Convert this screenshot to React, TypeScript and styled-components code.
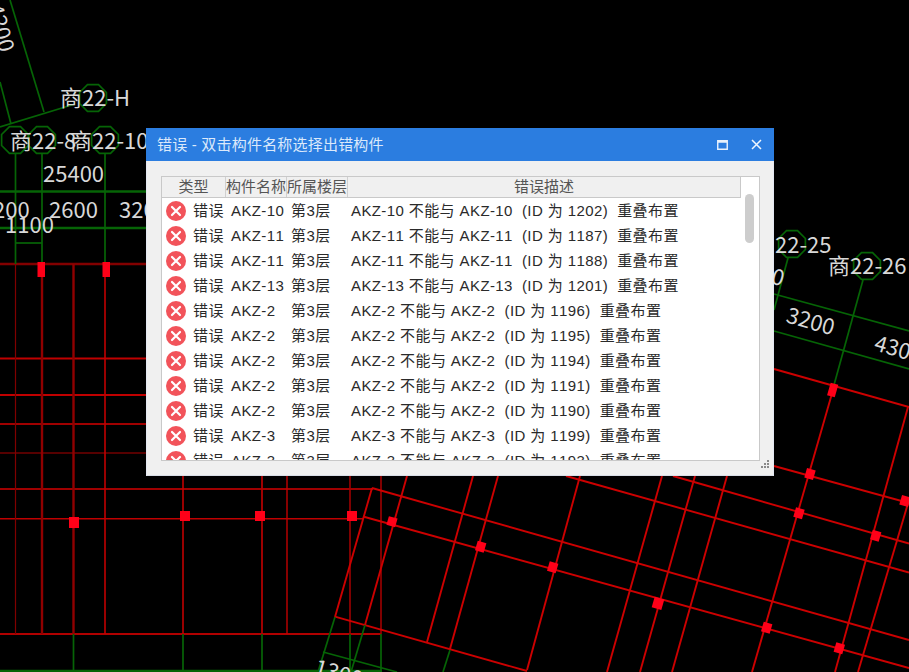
import React from "react";
import styled, { createGlobalStyle } from "styled-components";

const Global = createGlobalStyle`
  html, body { margin: 0; padding: 0; background: #000; }
  body { font-family: "Liberation Sans", "Noto Sans CJK SC", sans-serif; }
`;

const Scene = styled.div`
  position: relative;
  width: 909px;
  height: 672px;
  overflow: hidden;
  background: #000;
`;

const Canvas = styled.svg`
  display: block;
  width: 909px;
  height: 672px;
`;

const Label = styled.text`
  fill: #d8d8d8;
  font-family: "Noto Sans CJK SC", "Liberation Sans", sans-serif;
  font-size: 22px;
`;

const Dialog = styled.section`
  position: absolute;
  left: 146px;
  top: 128px;
  width: 628px;
  height: 348px;
  display: flex;
  flex-direction: column;
  background: #f0f0f0;
  box-shadow: inset 1px 0 0 #e4e8f2, inset -1px 0 0 #e4e8f2, inset 0 -1px 0 #d9dde6;
`;

const TitleBar = styled.header`
  height: 33px;
  flex: none;
  display: flex;
  align-items: center;
  padding: 0 1px 0 11px;
  background: #2b7de0;
`;

const Title = styled.h1`
  flex: 1;
  margin: 0;
  color: #dbe9fb;
  font-size: 15px;
  font-weight: 400;
  line-height: 33px;
  letter-spacing: 0.2px;
  white-space: nowrap;
`;

const WindowButton = styled.button`
  width: 34px;
  height: 33px;
  padding: 0;
  border: 0;
  display: flex;
  align-items: center;
  justify-content: center;
  background: transparent;
`;

const Body = styled.div`
  flex: 1;
  min-height: 0;
  position: relative;
  padding: 15px 14px 15px 15px;
`;

const ListBox = styled.div`
  height: 285px;
  display: flex;
  border: 1px solid #c9c9c9;
  box-sizing: border-box;
  background: #fff;
  overflow: hidden;
`;

const Table = styled.div`
  width: 578px;
  flex: none;
  display: flex;
  flex-direction: column;
`;

const HeaderRow = styled.div`
  height: 20px;
  flex: none;
  display: grid;
  grid-template-columns: 64px 61px 61px 392px;
  background: #f0f0f0;
  border-bottom: 1px solid #c9c9c9;
  border-right: 1px solid #c9c9c9;
  margin-right: -1px;
`;

const HeaderCell = styled.div`
  font-size: 15px;
  line-height: 20px;
  text-align: center;
  color: #555;
  white-space: nowrap;
  border-right: 1px solid #d0d0d0;
  box-sizing: border-box;
  &:last-child {
    border-right: 0;
  }
`;

const Row = styled.div`
  height: 25px;
  flex: none;
  display: grid;
  grid-template-columns: 64px 61px 61px 392px;
  align-items: center;
  color: #2a2a2a;
  font-size: 15px;
  font-kerning: none;
  line-height: 25px;
  letter-spacing: 0.4px;
  white-space: pre;
`;

const TypeCell = styled.div`
  display: flex;
  align-items: center;
  gap: 7px;
  padding-left: 4px;
`;

const NameCell = styled.div`
  padding-left: 5px;
`;

const FloorCell = styled.div`
  padding-left: 4px;
`;

const DescCell = styled.div`
  padding-left: 3px;
`;

const ScrollTrack = styled.div`
  flex: 1;
  padding: 17px 0 0 5px;
`;

const ScrollThumb = styled.div`
  width: 9px;
  height: 49px;
  border-radius: 5px;
  background: #cdcdcd;
`;

const Grip = styled.svg`
  position: absolute;
  right: 3px;
  bottom: 4px;
  width: 12px;
  height: 12px;
`;

const rows: [string, string][] = [
  ["AKZ-10", "AKZ-10 不能与 AKZ-10  (ID 为 1202)  重叠布置"],
  ["AKZ-11", "AKZ-11 不能与 AKZ-11  (ID 为 1187)  重叠布置"],
  ["AKZ-11", "AKZ-11 不能与 AKZ-11  (ID 为 1188)  重叠布置"],
  ["AKZ-13", "AKZ-13 不能与 AKZ-13  (ID 为 1201)  重叠布置"],
  ["AKZ-2", "AKZ-2 不能与 AKZ-2  (ID 为 1196)  重叠布置"],
  ["AKZ-2", "AKZ-2 不能与 AKZ-2  (ID 为 1195)  重叠布置"],
  ["AKZ-2", "AKZ-2 不能与 AKZ-2  (ID 为 1194)  重叠布置"],
  ["AKZ-2", "AKZ-2 不能与 AKZ-2  (ID 为 1191)  重叠布置"],
  ["AKZ-2", "AKZ-2 不能与 AKZ-2  (ID 为 1190)  重叠布置"],
  ["AKZ-3", "AKZ-3 不能与 AKZ-3  (ID 为 1199)  重叠布置"],
  ["AKZ-3", "AKZ-3 不能与 AKZ-3  (ID 为 1193)  重叠布置"],
];

const ErrorIcon = () => (
  <svg width="20" height="20" viewBox="0 0 20 20" style={{ flex: "none" }}>
    <circle cx="10" cy="10" r="10" fill="#f2535a" />
    <path d="M6 6l8 8M14 6l-8 8" stroke="#fff" strokeWidth="2.2" strokeLinecap="round" />
  </svg>
);

type Seg = [number, number, number, number];

const poly = (cx: number, cy: number, r: number) =>
  Array.from({ length: 8 }, (_, i) => {
    const a = Math.PI / 8 + (i * Math.PI) / 4;
    return `${(cx + r * Math.cos(a)).toFixed(1)},${(cy + r * Math.sin(a)).toFixed(1)}`;
  }).join(" ");

const hexes: [number, number][] = [
  [93, 98], [15, 140], [42, 140], [105, 140], [792, 244], [867, 266],
];

const greenLines: Seg[] = [
  [10, 0, 44, 112], [0, 82, 11, 124], [0, 127, 75, 104],
  [15.5, 154, 15.5, 264], [42, 154, 42, 264], [105, 154, 105, 264],
  [0, 191.5, 146, 191.5], [0, 228, 146, 228], [15, 243, 42, 243],
  [73.5, 634, 73.5, 672], [183, 634, 183, 672], [262, 634, 262, 672], [350, 634, 350, 672], [381, 634, 381, 672],
  [0, 671, 382, 671], [335, 617, 318, 672], [365, 625, 351, 672], [323, 652, 397, 672],
  [450, 650, 443, 672],
  [774, 294, 909, 331], [774, 331, 909, 369], [788, 258, 774, 310], [863, 280, 834, 385],
];

const redH: [number, string, number, number][] = [
  [264, "#820000", 2.4, 146], [358.5, "#c00000", 1.8, 146], [395, "#c00000", 1.8, 146],
  [424, "#a00000", 1.8, 146], [453, "#560000", 2.2, 146],
  [489, "#a00000", 1.8, 373], [518.7, "#c00000", 1.6, 363], [634, "#b00000", 1.8, 381],
];

const redV: [number, string, number, number][] = [
  [15.5, "#800000", 1.2, 634], [42, "#900000", 2.4, 634], [73.5, "#900000", 2.4, 634], [105, "#c00000", 1.6, 634],
  [183, "#c00000", 1.6, 634], [262, "#b00000", 1.8, 634], [287, "#c00000", 1.4, 634],
  [350, "#a00000", 1.6, 634], [381, "#a00000", 1.6, 634],
];

const redTilted: Seg[] = [
  [372, 488, 909, 640], [363, 516.5, 909, 668], [335, 616.7, 527, 671], [566, 476, 909, 572.5],
  [673, 476, 909, 543.5], [774, 369, 909, 407], [774, 466, 909, 503],
  [372, 488, 335, 617], [407, 476, 365, 625], [473, 476, 427, 642], [498, 476, 450, 649],
  [580, 476, 527, 670], [662, 476, 607, 672], [695, 476, 640, 672], [727, 476, 672, 672],
  [833, 390, 752, 672], [908, 407, 835, 672], [909, 500, 858, 672],
];

const blocks: [number, number, number, number][] = [
  [37.5, 262, 7.5, 15], [102.5, 262, 7.5, 15], [69, 517, 10, 11],
  [180, 511, 10, 10], [255, 511, 10, 10], [347, 511, 10, 10],
];

const tiltedBlocks: [number, number, number, number][] = [
  [392, 521.7, 9, 9], [480.7, 546.7, 9, 10], [552.7, 567.3, 9, 10], [658, 603.3, 10, 11],
  [766.7, 627.7, 9, 10], [839.3, 648.3, 9, 10], [799, 513.3, 9, 10], [875.7, 535.7, 9, 10],
  [810, 474, 9, 10], [905, 501, 9, 10], [832.7, 390, 8, 13],
];

const Drawing = () => (
  <Canvas viewBox="0 0 909 672">
    {redH.map(([y, c, w, x2]) => <line key={`h${y}`} x1="0" y1={y} x2={x2} y2={y} stroke={c} strokeWidth={w} />)}
    {redV.map(([x, c, w, y2]) => <line key={`v${x}`} x1={x} y1="264" x2={x} y2={y2} stroke={c} strokeWidth={w} />)}
    {redTilted.map(([a, b, c, d], i) => (
      <line key={`t${i}`} x1={a} y1={b} x2={c} y2={d} stroke="#cc0000" strokeWidth="1.9" />
    ))}
    {greenLines.map(([a, b, c, d], i) => (
      <line key={`g${i}`} x1={a} y1={b} x2={c} y2={d} stroke="#066406" strokeWidth={a === 0 && b === d ? 2.4 : 1.7} />
    ))}
    {hexes.map(([x, y]) => (
      <polygon key={`${x}`} points={poly(x, y, 14.5)} fill="none" stroke="#066406" strokeWidth="1.7" />
    ))}
    {blocks.map(([x, y, w, h]) => <rect key={`b${x}`} x={x} y={y} width={w} height={h} fill="#ff0018" />)}
    {tiltedBlocks.map(([x, y, w, h]) => (
      <rect key={`tb${x}`} x={x - w / 2} y={y - h / 2} width={w} height={h} fill="#ff0018"
        transform={`rotate(16 ${x} ${y})`} />
    ))}
    <Label x="60" y="106">商22-H</Label>
    <Label x="10" y="149">商22-8</Label>
    <Label x="70" y="149">商22-10</Label>
    <Label x="43" y="182">25400</Label>
    <Label x="-7" y="218">200</Label>
    <Label x="49" y="218">2600</Label>
    <Label x="119" y="218">3200</Label>
    <Label x="5" y="233">1100</Label>
    <Label x="0" y="0" transform="translate(-13 6) rotate(75)">4200</Label>
    <Label x="775" y="253">22-25</Label>
    <Label x="828" y="274">商22-26</Label>
    <Label x="770" y="283" transform="rotate(16 770 283)">0</Label>
    <Label x="785" y="322" transform="rotate(16 785 322)">3200</Label>
    <Label x="873" y="350" transform="rotate(16 873 350)">4300</Label>
    <Label x="313" y="674" transform="rotate(16 313 674)">1300</Label>
  </Canvas>
);

export default function App() {
  return (
    <Scene>
      <Global />
      <Drawing />
      <Dialog>
        <TitleBar>
          <Title>错误 - 双击构件名称选择出错构件</Title>
          <WindowButton aria-label="最大化">
            <svg width="11" height="10" viewBox="0 0 11 10">
              <path d="M.75 .75h9.5v8.5H.75zM.75 2h9.5" fill="none" stroke="#e8f1fc" strokeWidth="1.4" />
            </svg>
          </WindowButton>
          <WindowButton aria-label="关闭">
            <svg width="11" height="11" viewBox="0 0 11 11">
              <path d="M1 1l9 9M10 1l-9 9" stroke="#f0f6fe" strokeWidth="1.5" />
            </svg>
          </WindowButton>
        </TitleBar>
        <Body>
          <ListBox>
            <Table>
              <HeaderRow>
                <HeaderCell>类型</HeaderCell>
                <HeaderCell>构件名称</HeaderCell>
                <HeaderCell>所属楼层</HeaderCell>
                <HeaderCell>错误描述</HeaderCell>
              </HeaderRow>
              {rows.map(([name, desc], i) => (
                <Row key={i}>
                  <TypeCell>
                    <ErrorIcon />
                    错误
                  </TypeCell>
                  <NameCell>{name}</NameCell>
                  <FloorCell>第3层</FloorCell>
                  <DescCell>{desc}</DescCell>
                </Row>
              ))}
            </Table>
            <ScrollTrack>
              <ScrollThumb />
            </ScrollTrack>
          </ListBox>
          <Grip viewBox="0 0 12 12">
            <g fill="#8a8a8a">
              <rect x="8" y="0" width="2" height="2" />
              <rect x="5" y="3" width="2" height="2" />
              <rect x="8" y="3" width="2" height="2" />
              <rect x="2" y="6" width="2" height="2" />
              <rect x="5" y="6" width="2" height="2" />
              <rect x="8" y="6" width="2" height="2" />
            </g>
          </Grip>
        </Body>
      </Dialog>
    </Scene>
  );
}
